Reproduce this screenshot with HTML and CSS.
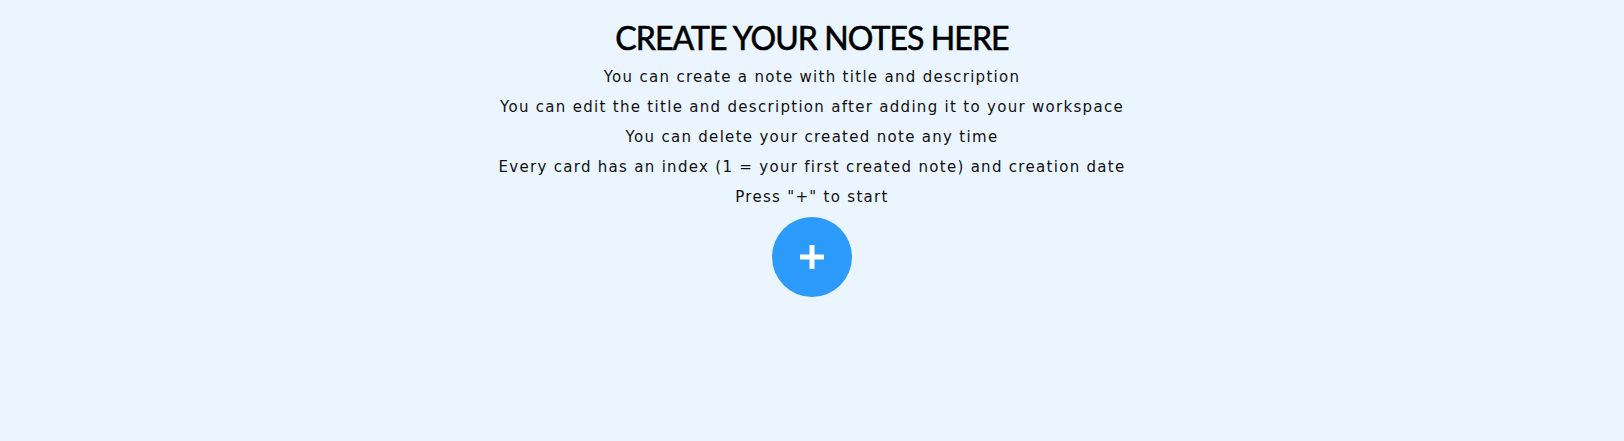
FILE: index.html
```html
<!DOCTYPE html>
<html>
<head>
<meta charset="utf-8">
<link rel="stylesheet" href="styles.css">
</head>
<body>
<main class="intro">
  <h1 class="title">CREATE YOUR NOTES HERE</h1>
  <p class="line">You can create a note with title and description</p>
  <p class="line">You can edit the title and description after adding it to your workspace</p>
  <p class="line">You can delete your created note any time</p>
  <p class="line">Every card has an index (1 = your first created note) and creation date</p>
  <p class="line">Press "+" to start</p>
  <button class="add" aria-label="Add note">
    <svg width="26" height="26" viewBox="0 0 26 26"><path d="M13 1v24M1 13h24" stroke="#fff" stroke-width="5" fill="none"/></svg>
  </button>
</main>
</body>
</html>
```
FILE: styles.css
```css
html, body {
  margin: 0;
  background: #eaf5ff;
  height: 100%;
}
.intro {
  display: flex;
  flex-direction: column;
  align-items: center;
  padding-top: 18px;
  font-family: "DejaVu Sans", sans-serif;
  color: #111;
}
.title {
  margin: 0 0 4px;
  font-family: "Lato", sans-serif;
  font-size: 32px;
  line-height: 40px;
  font-weight: 400;
  letter-spacing: -0.9px;
  -webkit-text-stroke: 0.6px #000;
  color: #000;
}
.line {
  margin: 0;
  font-size: 15px;
  line-height: 30px;
  letter-spacing: 1.3px;
}
.add {
  margin-top: 5px;
  width: 80px;
  height: 80px;
  border: none;
  border-radius: 50%;
  background: #2c9bfc;
  display: flex;
  align-items: center;
  justify-content: center;
  padding: 0;
}
```
